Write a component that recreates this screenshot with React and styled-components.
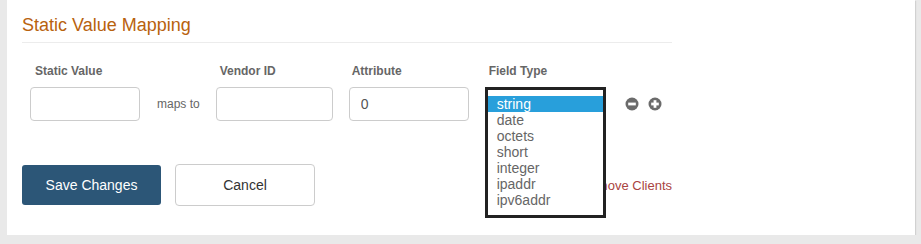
import styled, { createGlobalStyle } from 'styled-components';

const GlobalStyle = createGlobalStyle`
	body {
		margin: 0;
		background: #e9e9e9;
		font-family: 'Liberation Sans', Arial, sans-serif;
	}
`;

const fieldTypes = ['string', 'date', 'octets', 'short', 'integer', 'ipaddr', 'ipv6addr'];

const MinusIcon = () => (
	<svg width='14' height='14' viewBox='0 0 14 14'>
		<circle cx='7' cy='7' r='6.5' fill='#6b6b6b' />
		<rect x='3.2' y='5.6' width='7.6' height='2.8' fill='#fff' />
	</svg>
);

const PlusIcon = () => (
	<svg width='14' height='14' viewBox='0 0 14 14'>
		<circle cx='7' cy='7' r='6.5' fill='#6b6b6b' />
		<rect x='3.2' y='5.6' width='7.6' height='2.8' fill='#fff' />
		<rect x='5.6' y='3.2' width='2.8' height='7.6' fill='#fff' />
	</svg>
);

const App = () => {
	return (
		<>
			<GlobalStyle />
			<Panel>
				<Content>
					<Title>Static Value Mapping</Title>
					<MappingRow>
						<Field>
							<Label $indent={5}>Static Value</Label>
							<TextInput $width={110} />
						</Field>
						<MapsTo>maps to</MapsTo>
						<Field>
							<Label>Vendor ID</Label>
							<TextInput $width={117} />
						</Field>
						<Field>
							<Label $indent={3}>Attribute</Label>
							<TextInput $width={120} defaultValue='0' />
						</Field>
						<Field>
							<Label>Field Type</Label>
							<SelectSlot>
								<Listbox>
									{fieldTypes.map((type, i) => (
										<Option key={type} $selected={i === 0}>
											{type}
										</Option>
									))}
								</Listbox>
							</SelectSlot>
						</Field>
						<Icons>
							<MinusIcon />
							<PlusIcon />
						</Icons>
					</MappingRow>
					<ActionRow>
						<Buttons>
							<SaveButton>Save Changes</SaveButton>
							<CancelButton>Cancel</CancelButton>
						</Buttons>
						<RemoveLink>Remove Clients</RemoveLink>
					</ActionRow>
				</Content>
			</Panel>
		</>
	);
};

const Panel = styled.div`
	margin-left: 7px;
	width: 908px;
	background: #fff;
	box-shadow: 1px 1px 1px rgba(0, 0, 0, 0.1);
	padding: 15px 0 29px 15px;
	box-sizing: border-box;
`;

const Content = styled.div`
	width: 650px;
`;

const Title = styled.h3`
	margin: 0;
	font-size: 18px;
	line-height: 21px;
	font-weight: normal;
	color: #b8620e;
	padding-bottom: 6px;
	border-bottom: 1px solid #ececec;
`;

const MappingRow = styled.div`
	display: flex;
	align-items: flex-end;
	margin-top: 21px;
	padding-left: 8px;
`;

const Field = styled.div`
	display: flex;
	flex-direction: column;
	margin-right: 16px;
`;

const Label = styled.label`
	font-size: 12px;
	line-height: 14px;
	font-weight: bold;
	color: #666;
	padding-left: ${(p) => p.$indent ?? 4}px;
	margin-bottom: 9px;
`;

const TextInput = styled.input`
	width: ${(p) => p.$width}px;
	height: 34px;
	box-sizing: border-box;
	border: 1px solid #ccc;
	border-radius: 4px;
	padding: 0 11px;
	font-family: inherit;
	font-size: 14px;
	color: #555;
	outline: none;
`;

const MapsTo = styled.span`
	font-size: 12px;
	line-height: 34px;
	color: #666;
	margin: 0 16px 0 1px;
`;

const SelectSlot = styled.div`
	position: relative;
	width: 121px;
	height: 34px;
`;

const Listbox = styled.div`
	position: absolute;
	top: 0;
	left: 0;
	z-index: 2;
	width: 121px;
	box-sizing: border-box;
	border: 3px solid #222;
	background: #fff;
	padding: 6px 0 7px;
`;

const Option = styled.div`
	font-size: 14px;
	line-height: 16px;
	height: 16px;
	padding-left: 9px;
	color: ${(p) => (p.$selected ? '#fff' : '#666')};
	background: ${(p) => (p.$selected ? '#289fdb' : 'transparent')};
`;

const Icons = styled.div`
	display: flex;
	align-items: center;
	gap: 9px;
	height: 34px;
	margin-left: 3px;
`;

const ActionRow = styled.div`
	display: flex;
	align-items: center;
	justify-content: space-between;
	margin-top: 43px;
`;

const Buttons = styled.div`
	display: flex;
	align-items: center;
	gap: 14px;
`;

const SaveButton = styled.button`
	width: 139px;
	height: 40px;
	border: none;
	border-radius: 3px;
	background: #2c5677;
	color: #fff;
	font-family: inherit;
	font-size: 14px;
`;

const CancelButton = styled.button`
	width: 140px;
	height: 42px;
	border: 1px solid #ccc;
	border-radius: 4px;
	background: #fff;
	color: #333;
	font-family: inherit;
	font-size: 14px;
`;

const RemoveLink = styled.a`
	font-size: 13px;
	color: #a94442;
	text-decoration: none;
`;

export default App;
